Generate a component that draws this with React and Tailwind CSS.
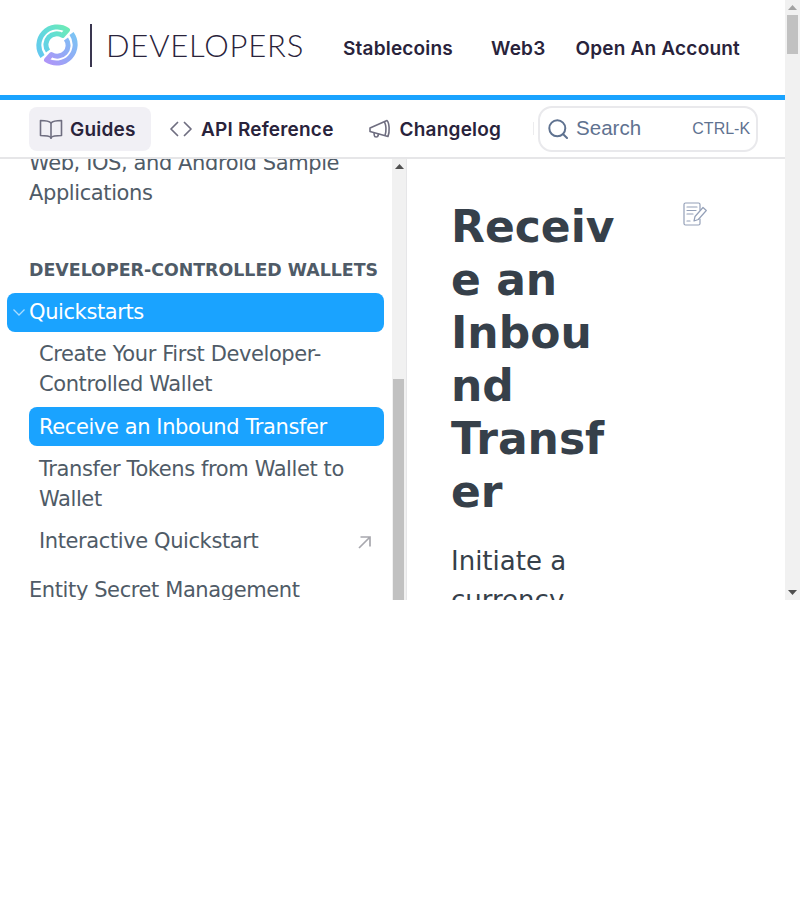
import React from 'react';

const CircleLogo = () => (
  <svg width="42" height="42" viewBox="0 0 42 42" fill="none" className="shrink-0">
    <defs>
      <linearGradient id="logoA" x1="36" y1="4" x2="4" y2="32" gradientUnits="userSpaceOnUse">
        <stop offset="0" stopColor="#6eedb0" />
        <stop offset="0.5" stopColor="#62dcd8" />
        <stop offset="1" stopColor="#64c8f0" />
      </linearGradient>
      <linearGradient id="logoB" x1="38" y1="10" x2="8" y2="38" gradientUnits="userSpaceOnUse">
        <stop offset="0" stopColor="#7cc4f4" />
        <stop offset="0.5" stopColor="#93a9f6" />
        <stop offset="1" stopColor="#b294f8" />
      </linearGradient>
    </defs>
    <path d="M6.500 32.500A18.500 18.500 0 0 1 31.500 6L26.500 11.500A10.800 10.800 0 0 0 12 27" stroke="url(#logoA)" strokeWidth="5" strokeLinejoin="round" />
    <path d="M35.500 9.500A18.500 18.500 0 0 1 10.500 36L15.500 30.500A10.800 10.800 0 0 0 30 15" stroke="url(#logoB)" strokeWidth="5" strokeLinejoin="round" />
  </svg>
);

const BookIcon = () => (
  <svg width="24" height="22" viewBox="0 0 24 22" fill="none" stroke="#6f6e80" strokeWidth="1.6" strokeLinejoin="round">
    <path d="M12 5C10.500 3.300 8 2.500 1.500 2.500V17.500C8 17.500 10.500 18 12 19.500C13.500 18 16 17.500 22.500 17.500V2.500C16 2.500 13.500 3.300 12 5Z" />
    <path d="M12 5V21" />
  </svg>
);

const CodeIcon = () => (
  <svg width="22" height="16" viewBox="0 0 22 16" fill="none" stroke="#6f6e80" strokeWidth="1.7" strokeLinecap="round" strokeLinejoin="round">
    <path d="M7.500 1.500L1 8L7.500 14.500" />
    <path d="M14.500 1.500L21 8L14.500 14.500" />
  </svg>
);

const MegaphoneIcon = () => (
  <svg width="22" height="20" viewBox="0 0 22 20" fill="none" stroke="#6f6e80" strokeWidth="1.600" strokeLinejoin="round">
    <path d="M1 9L18 1.500C20.500 4 20.800 13 19 17.500L1 12.500Z" />
    <path d="M15.500 3C17.200 6.500 17.300 12 16 16.700" />
    <path d="M5 13.500L5.300 16.500C5.500 18.500 8.800 18.500 9.200 16.500L9.400 14.700" />
  </svg>
);

const SearchIcon = () => (
  <svg width="20" height="20" viewBox="0 0 20 20" fill="none" stroke="#5f7290" strokeWidth="2" strokeLinecap="round">
    <circle cx="9.300" cy="9.300" r="8" />
    <path d="M15.200 15.200L19 19" />
  </svg>
);

const EditIcon = () => (
  <svg width="24" height="24" viewBox="0 0 24 24" fill="none" stroke="#94a0b8" strokeWidth="1.200" strokeLinecap="round" strokeLinejoin="round">
    <path d="M17 8V2.500C17 1.700 16.300 1 15.500 1H2.500C1.700 1 1 1.700 1 2.500V21.500C1 22.300 1.700 23 2.500 23H15.500C16.300 23 17 22.300 17 21.500V17" />
    <path d="M4 5H14M4 8.500H13M4 12H10M4 19H7" />
    <path d="M11 19L12 14.500L20 5.500L23.300 8.500L15.300 17.500Z" />
  </svg>
);

const ChevronIcon = () => (
  <svg width="12" height="7" viewBox="0 0 12 7" fill="none" stroke="#a8dcff" strokeWidth="1.300" className="ml-[6px] mr-[4px] shrink-0">
    <path d="M0.500 0.500L6 6L11.500 0.500" />
  </svg>
);

const ExternalIcon = () => (
  <svg width="13" height="13" viewBox="0 0 13 13" fill="none" stroke="#a8a8ae" strokeWidth="1.700" className="mt-[3px] shrink-0">
    <path d="M1 12L12 1M2.500 1H12V10.500" />
  </svg>
);

const Triangle = ({ down, dark }) => (
  <svg width="9" height="5" viewBox="0 0 9 5" fill={dark ? '#505050' : '#a3a3a3'}>
    <path d={down ? 'M0 0H9L4.500 5Z' : 'M0 5H9L4.500 0Z'} />
  </svg>
);

const App = () => {
  return (
    <div className="w-[800px] h-[900px] bg-white overflow-hidden font-['DejaVu_Sans',sans-serif]">
      <div className="flex h-[600px] overflow-hidden">
        <div className="w-[785px] flex flex-col">
          {/* Top header */}
          <header className="h-[100px] shrink-0 flex items-center border-b-[5px] border-[#1aa3ff] font-['Inter',sans-serif] text-[#29233b]">
            <div className="flex items-center ml-[36px] w-[307px] -mt-[5px]">
              <CircleLogo />
              <div className="w-[2px] h-[43px] bg-[#3a3650] ml-[12px]" />
              <span className="ml-[14px] font-['Lato',sans-serif] font-light text-[31px] tracking-[0.8px] text-[#29233b] whitespace-nowrap">DEVELOPERS</span>
            </div>
            <nav className="flex items-center text-[19px] font-semibold tracking-[0.2px] mt-[3px] whitespace-nowrap">
              <a>Stablecoins</a>
              <a className="ml-[38px]">Web3</a>
              <a className="ml-[30px]">Open An Account</a>
            </nav>
          </header>

          {/* Sub nav */}
          <div className="h-[59px] shrink-0 flex items-center border-b-2 border-[#e6e6e8] pl-[29px] font-['Inter',sans-serif] text-[#29233b] text-[19px] font-semibold tracking-[0.2px] whitespace-nowrap">
            <a className="w-[122px] h-[44px] rounded-[8px] bg-[#f1f0f5] flex items-center pl-[10px] gap-[7px]">
              <BookIcon />
              <span className="pt-[3px]">Guides</span>
            </a>
            <a className="flex items-center ml-[19px] gap-[9px]">
              <CodeIcon />
              <span className="pt-[3px]">API Reference</span>
            </a>
            <a className="flex items-center ml-[35px] gap-[9px]">
              <MegaphoneIcon />
              <span className="pt-[3px]">Changelog</span>
            </a>
            <div className="ml-[32px] w-px h-[13px] bg-[#ececee]" />
            <div className="ml-[4px] w-[220px] h-[46px] rounded-[14px] border-2 border-[#e9e9ec] flex items-center pl-[8px] pr-[6px] font-['Liberation_Sans',sans-serif] font-normal tracking-normal text-[#5f7290]">
              <SearchIcon />
              <span className="ml-[8px] text-[20.500px]">Search</span>
              <span className="ml-auto text-[16px]">CTRL-K</span>
            </div>
          </div>

          <div className="flex-1 flex min-h-0">
            {/* Sidebar */}
            <aside className="w-[392px] shrink-0 overflow-hidden text-[#4f5b67] text-[21px] tracking-[-0.4px] leading-[30px]">
              <div className="-mt-[11px] pl-[29px] pr-[8px]">
                <p>Web, IOS, and Android Sample Applications</p>
                <h3 className="mt-[49px] text-[17.400px] tracking-normal leading-[26px] font-bold whitespace-nowrap">DEVELOPER-CONTROLLED WALLETS</h3>
                <div className="-ml-[22px] mt-[10px] h-[39px] rounded-[8px] bg-[#1aa3ff] text-white flex items-center pb-[1px]">
                  <ChevronIcon />
                  Quickstarts
                </div>
                <p className="mt-[7px] pl-[10px]">Create Your First Developer-Controlled Wallet</p>
                <div className="mt-[8px] h-[39px] rounded-[8px] bg-[#1aa3ff] text-white flex items-center pl-[10px]">Receive an Inbound Transfer</div>
                <p className="mt-[8px] pl-[10px]">Transfer Tokens from Wallet to Wallet</p>
                <div className="mt-[12px] pl-[10px] flex items-center justify-between pr-[13px]">
                  Interactive Quickstart
                  <ExternalIcon />
                </div>
                <p className="mt-[19px]">Entity Secret Management</p>
              </div>
            </aside>

            {/* Sidebar scrollbar */}
            <div className="w-[15px] shrink-0 bg-[#f1f1f1] border-r border-[#e6e6e8] flex flex-col items-center">
              <div className="h-[15px] flex items-center"><Triangle dark /></div>
              <div className="w-[11px] h-[221px] bg-[#c1c1c1] mt-[205px] mr-px" />
            </div>

            {/* Main content */}
            <main className="flex-1 min-w-0 overflow-hidden pl-[44px] pt-[41px] text-[#36404a] flex items-start">
              <div className="w-[170px] shrink-0">
                <h1 className="text-[44px] leading-[53px] font-bold break-words">Receive an Inbound Transfer</h1>
                <p className="mt-[24px] text-[26px] leading-[39px]">Initiate a currency</p>
              </div>
              <div className="ml-[62px] mt-[2px]"><EditIcon /></div>
            </main>
          </div>
        </div>

        {/* Page scrollbar */}
        <div className="w-[15px] shrink-0 bg-[#f1f1f1] flex flex-col items-center">
          <div className="h-[15px] flex items-center"><Triangle /></div>
          <div className="w-[11px] h-[39px] bg-[#c1c1c1]" />
          <div className="mt-auto h-[15px] flex items-center"><Triangle down dark /></div>
        </div>
      </div>
    </div>
  );
};

export default App;
